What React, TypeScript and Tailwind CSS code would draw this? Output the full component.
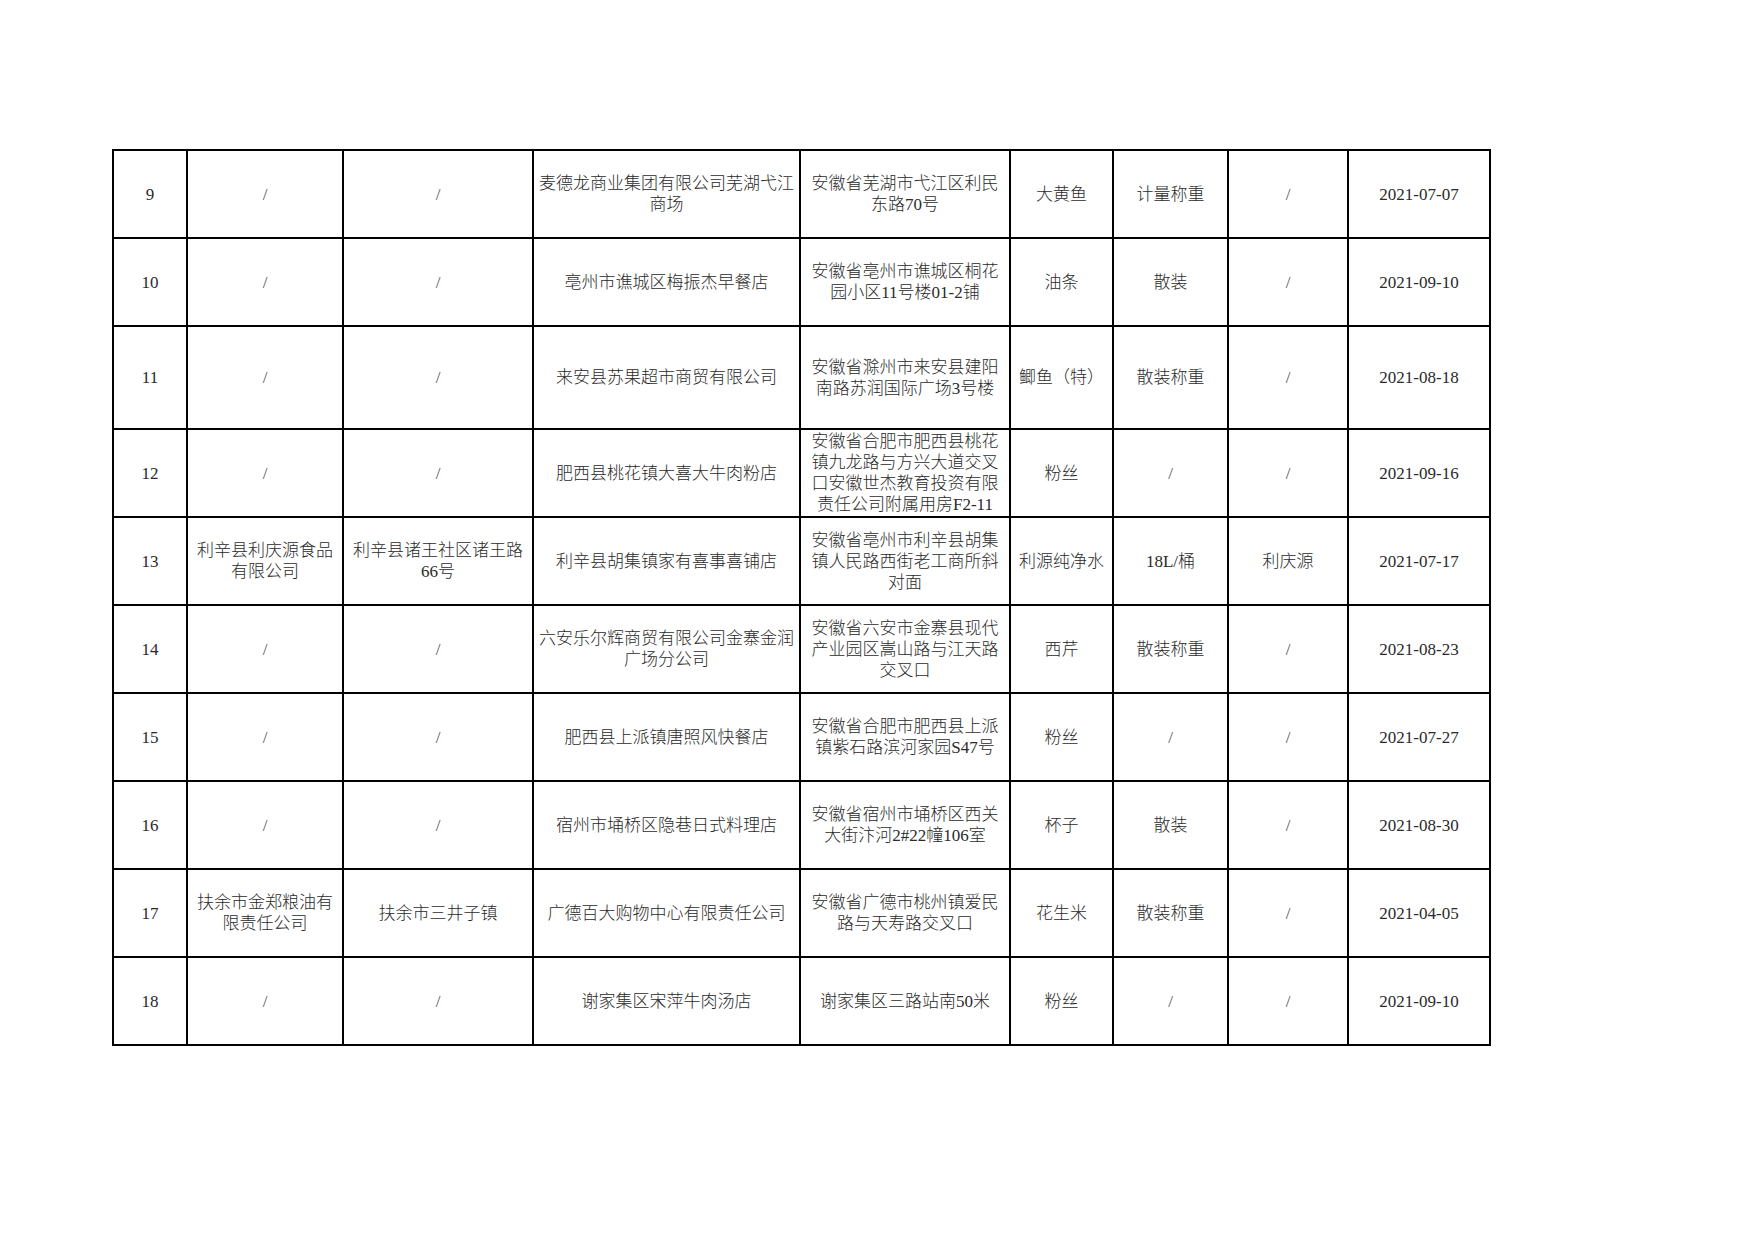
import React from "react";

type Row = {
  no: string;
  maker: string;
  makerAddr: string;
  seller: string;
  sellerAddr: string;
  food: string;
  spec: string;
  brand: string;
  date: string;
  tall?: boolean;
};

const rows: Row[] = [
  {
    no: "9",
    maker: "/",
    makerAddr: "/",
    seller: "麦德龙商业集团有限公司芜湖弋江\n商场",
    sellerAddr: "安徽省芜湖市弋江区利民\n东路70号",
    food: "大黄鱼",
    spec: "计量称重",
    brand: "/",
    date: "2021-07-07",
  },
  {
    no: "10",
    maker: "/",
    makerAddr: "/",
    seller: "亳州市谯城区梅振杰早餐店",
    sellerAddr: "安徽省亳州市谯城区桐花\n园小区11号楼01-2铺",
    food: "油条",
    spec: "散装",
    brand: "/",
    date: "2021-09-10",
  },
  {
    no: "11",
    maker: "/",
    makerAddr: "/",
    seller: "来安县苏果超市商贸有限公司",
    sellerAddr: "安徽省滁州市来安县建阳\n南路苏润国际广场3号楼",
    food: "鲫鱼（特）",
    spec: "散装称重",
    brand: "/",
    date: "2021-08-18",
    tall: true,
  },
  {
    no: "12",
    maker: "/",
    makerAddr: "/",
    seller: "肥西县桃花镇大喜大牛肉粉店",
    sellerAddr:
      "安徽省合肥市肥西县桃花\n镇九龙路与方兴大道交叉\n口安徽世杰教育投资有限\n责任公司附属用房F2-11",
    food: "粉丝",
    spec: "/",
    brand: "/",
    date: "2021-09-16",
  },
  {
    no: "13",
    maker: "利辛县利庆源食品\n有限公司",
    makerAddr: "利辛县诸王社区诸王路\n66号",
    seller: "利辛县胡集镇家有喜事喜铺店",
    sellerAddr: "安徽省亳州市利辛县胡集\n镇人民路西街老工商所斜\n对面",
    food: "利源纯净水",
    spec: "18L/桶",
    brand: "利庆源",
    date: "2021-07-17",
  },
  {
    no: "14",
    maker: "/",
    makerAddr: "/",
    seller: "六安乐尔辉商贸有限公司金寨金润\n广场分公司",
    sellerAddr: "安徽省六安市金寨县现代\n产业园区嵩山路与江天路\n交叉口",
    food: "西芹",
    spec: "散装称重",
    brand: "/",
    date: "2021-08-23",
  },
  {
    no: "15",
    maker: "/",
    makerAddr: "/",
    seller: "肥西县上派镇唐照风快餐店",
    sellerAddr: "安徽省合肥市肥西县上派\n镇紫石路滨河家园S47号",
    food: "粉丝",
    spec: "/",
    brand: "/",
    date: "2021-07-27",
  },
  {
    no: "16",
    maker: "/",
    makerAddr: "/",
    seller: "宿州市埇桥区隐巷日式料理店",
    sellerAddr: "安徽省宿州市埇桥区西关\n大街汴河2#22幢106室",
    food: "杯子",
    spec: "散装",
    brand: "/",
    date: "2021-08-30",
  },
  {
    no: "17",
    maker: "扶余市金郑粮油有\n限责任公司",
    makerAddr: "扶余市三井子镇",
    seller: "广德百大购物中心有限责任公司",
    sellerAddr: "安徽省广德市桃州镇爱民\n路与天寿路交叉口",
    food: "花生米",
    spec: "散装称重",
    brand: "/",
    date: "2021-04-05",
  },
  {
    no: "18",
    maker: "/",
    makerAddr: "/",
    seller: "谢家集区宋萍牛肉汤店",
    sellerAddr: "谢家集区三路站南50米",
    food: "粉丝",
    spec: "/",
    brand: "/",
    date: "2021-09-10",
  },
];

// column widths measured off the sheet
const colClasses = [
  "w-[74px]",
  "w-[156px]",
  "w-[190px]",
  "w-[267px]",
  "w-[210px]",
  "w-[103px]",
  "w-[115px]",
  "w-[120px]",
  "w-[142px]",
];

function Cell({ text, tall }: { text: string; tall?: boolean }) {
  const isSlash = text === "/";
  return (
    <td
      className={`border-2 border-black text-center align-middle whitespace-pre px-1 ${
        tall ? "h-[103px]" : "h-[88px]"
      } ${isSlash ? "text-[#555]" : "text-[#2a2a2a]"}`}
    >
      {text}
    </td>
  );
}

export default function App() {
  return (
    <div className="min-h-screen bg-white pt-[149px] pl-[112px] font-['Liberation_Serif','Noto_Sans_CJK_SC',serif] font-light">
      <table className="table-fixed border-collapse text-[17px] leading-[21px]">
        <colgroup>
          {colClasses.map((c, i) => (
            <col key={i} className={c} />
          ))}
        </colgroup>
        <tbody>
          {rows.map((r) => (
            <tr key={r.no}>
              <Cell text={r.no} tall={r.tall} />
              <Cell text={r.maker} tall={r.tall} />
              <Cell text={r.makerAddr} tall={r.tall} />
              <Cell text={r.seller} tall={r.tall} />
              <Cell text={r.sellerAddr} tall={r.tall} />
              <Cell text={r.food} tall={r.tall} />
              <Cell text={r.spec} tall={r.tall} />
              <Cell text={r.brand} tall={r.tall} />
              <Cell text={r.date} tall={r.tall} />
            </tr>
          ))}
        </tbody>
      </table>
    </div>
  );
}
